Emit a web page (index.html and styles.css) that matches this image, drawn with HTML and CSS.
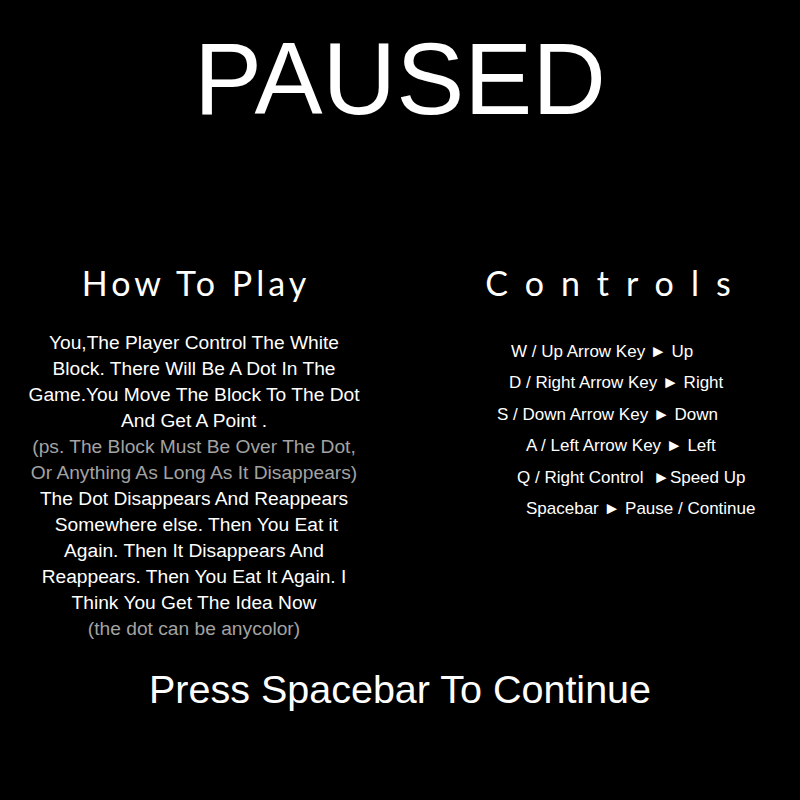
FILE: index.html
```html
<!DOCTYPE html>
<html>
<head>
<meta charset="utf-8">
<link rel="stylesheet" href="styles.css">
</head>
<body>
<main class="screen">
  <h1 class="title">PAUSED</h1>
  <section class="columns">
    <div class="col col-left">
      <h2 class="heading">How To Play</h2>
      <div class="story">
        <p class="line">You,The Player Control The White</p>
        <p class="line">Block. There Will Be A Dot In The</p>
        <p class="line">Game.You Move The Block To The Dot</p>
        <p class="line">And Get A Point .</p>
        <p class="line muted">(ps. The Block Must Be Over The Dot,</p>
        <p class="line muted">Or Anything As Long As It Disappears)</p>
        <p class="line">The Dot Disappears And Reappears</p>
        <p class="line shift-r">Somewhere else. Then You Eat it</p>
        <p class="line">Again. Then It Disappears And</p>
        <p class="line">Reappears. Then You Eat It Again. I</p>
        <p class="line">Think You Get The Idea Now</p>
        <p class="line muted">(the dot can be anycolor)</p>
      </div>
    </div>
    <div class="col col-right">
      <h2 class="heading spaced">Controls</h2>
      <ul class="keys">
        <li class="key k1">W / Up Arrow Key ► Up</li>
        <li class="key k2">D / Right Arrow Key ► Right</li>
        <li class="key k3">S / Down Arrow Key ► Down</li>
        <li class="key k4">A / Left Arrow Key ► Left</li>
        <li class="key k5">Q / Right Control&nbsp; ►Speed Up</li>
        <li class="key k6">Spacebar ► Pause / Continue</li>
      </ul>
    </div>
  </section>
  <p class="prompt">Press Spacebar To Continue</p>
</main>
</body>
</html>
```
FILE: styles.css
```css
html, body {
  margin: 0;
  padding: 0;
  background: #000;
}
.screen {
  width: 800px;
  height: 800px;
  background: #000;
  color: #fff;
  font-family: "Liberation Sans", Arial, sans-serif;
  display: flex;
  flex-direction: column;
  align-items: stretch;
}
.title {
  margin: 28px 0 0;
  font-size: 102px;
  line-height: 102px;
  font-weight: 400;
  text-align: center;
}
.columns {
  display: flex;
  margin-top: 131px;
}
.col {
  display: flex;
  flex-direction: column;
}
.col-left {
  width: 392px;
  align-items: center;
}
.col-right {
  width: 408px;
}
.heading {
  margin: 2px 0 0;
  font-family: "Lato", "DejaVu Sans", sans-serif;
  font-weight: 400;
  font-size: 34px;
  line-height: 40px;
  letter-spacing: 4px;
  text-align: center;
}
.spaced {
  letter-spacing: 17px;
  padding-left: 41px;
}
.story {
  margin-top: 27px;
  display: flex;
  flex-direction: column;
  align-items: center;
  margin-left: -4px;
}
.line {
  margin: 0;
  font-size: 19.2px;
  line-height: 26px;
  white-space: nowrap;
}
.muted {
  color: #a3a3a3;
}
.shift-r {
  padding-left: 5px;
}
.keys {
  list-style: none;
  margin: 33px 0 0 -4px;
  padding: 0;
  display: flex;
  flex-direction: column;
  align-items: flex-start;
}
.key {
  font-size: 17px;
  line-height: 31.4px;
  white-space: nowrap;
}
.k1 { margin-left: 123px; }
.k2 { margin-left: 121px; }
.k3 { margin-left: 109px; }
.k4 { margin-left: 138px; }
.k5 { margin-left: 129px; }
.k6 { margin-left: 138px; }
.prompt {
  margin: 24px 0 0;
  font-size: 39.5px;
  line-height: 46px;
  text-align: center;
}
```
